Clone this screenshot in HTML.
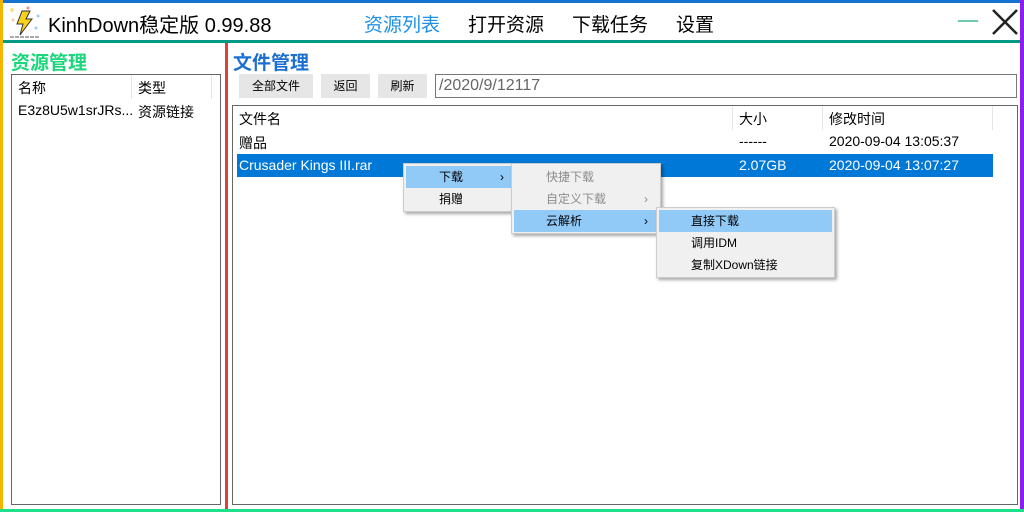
<!DOCTYPE html>
<html><head><meta charset="utf-8"><style>
*{margin:0;padding:0;box-sizing:border-box}
body{width:1024px;height:512px;position:relative;overflow:hidden;background:#fff;font-family:"Liberation Sans","Noto Sans CJK SC",sans-serif;font-size:14px;color:#000}
.a{position:absolute}
.t{white-space:nowrap}
.btn{position:absolute;background:#e6e6e6;top:74px;height:24px;text-align:center;line-height:24px;font-size:12px}
.menu{position:absolute;background:#f0f0f0;border:1px solid #ccc;box-shadow:2px 2px 3px rgba(0,0,0,.35);font-size:12px}
.mi{position:absolute;height:22px;line-height:22px;white-space:nowrap}
.hl{background:#91c9f7}
.dis{color:#8c8c8c}
</style></head><body>
<div class="a" style="left:0;top:0;width:1024px;height:3px;background:#1473d0"></div>
<div class="a" style="left:0;top:0;width:3px;height:512px;background:#f5b400"></div>
<div class="a" style="right:0;top:0;width:4px;height:512px;background:#8a1ff0"></div>
<div class="a" style="left:0;bottom:0;width:1024px;height:3px;background:#1ee08a"></div>
<div class="a" style="left:3px;top:40px;width:1017px;height:3px;background:#009a86"></div>
<div class="a" style="left:225px;top:43px;width:3px;height:466px;background:#d9443a"></div>
<svg class="a" style="left:8px;top:6px" width="34" height="32" viewBox="0 0 34 32">
<circle cx="4" cy="4" r="2" fill="#fde08a"/><circle cx="20" cy="2" r="1.5" fill="#f88"/><circle cx="30" cy="10" r="1.5" fill="#9cf"/><circle cx="28" cy="22" r="1.5" fill="#9cf"/><circle cx="5" cy="14" r="1.5" fill="#fc9"/>
<path d="M14 5 L22 5 L18 13 L24 13 L12 29 L15 18 L9 18 Z" fill="#f7d21a" stroke="#333" stroke-width="1"/>
<line x1="2" y1="31" x2="32" y2="31" stroke="#555" stroke-width="1" stroke-dasharray="4 1"/>
</svg>
<div class="a t" style="left:48px;top:9px;font-size:20px">KinhDown稳定版 0.99.88</div>
<div class="a t" style="left:364px;top:10px;font-size:19px;color:#1e90e8">资源列表</div>
<div class="a t" style="left:468px;top:10px;font-size:19px">打开资源</div>
<div class="a t" style="left:572px;top:10px;font-size:19px">下载任务</div>
<div class="a t" style="left:676px;top:10px;font-size:19px">设置</div>
<div class="a" style="left:958px;top:20px;width:20px;height:2px;background:#6cc9b0"></div>
<svg class="a" style="left:991px;top:8px" width="28" height="28"><path d="M2 2L26 26M26 2L2 26" stroke="#222" stroke-width="2.5"/></svg>
<div class="a t" style="left:11px;top:48px;font-size:19px;font-weight:bold;color:#1bd67a">资源管理</div>
<div class="a" style="left:11px;top:74px;width:210px;height:431px;border:1px solid #666"></div>
<div class="a" style="left:131px;top:75px;width:1px;height:24px;background:#e5e5e5"></div>
<div class="a" style="left:211px;top:75px;width:1px;height:24px;background:#e5e5e5"></div>
<div class="a t" style="left:18px;top:78px">名称</div>
<div class="a t" style="left:138px;top:78px">类型</div>
<div class="a t" style="left:18px;top:102px">E3z8U5w1srJRs...</div>
<div class="a t" style="left:138px;top:102px">资源链接</div>
<div class="a t" style="left:233px;top:48px;font-size:19px;font-weight:bold;color:#1a6fd0">文件管理</div>
<div class="btn" style="left:239px;width:74px">全部文件</div>
<div class="btn" style="left:321px;width:49px">返回</div>
<div class="btn" style="left:378px;width:49px">刷新</div>
<div class="a t" style="left:435px;top:74px;width:582px;height:24px;border:1px solid #777;color:#666;font-size:16px;line-height:22px;padding-left:3px">/2020/9/12117</div>
<div class="a" style="left:232px;top:105px;width:786px;height:400px;border:1px solid #666"></div>
<div class="a" style="left:732px;top:106px;width:1px;height:24px;background:#e5e5e5"></div>
<div class="a" style="left:822px;top:106px;width:1px;height:24px;background:#e5e5e5"></div>
<div class="a" style="left:992px;top:106px;width:1px;height:24px;background:#e5e5e5"></div>
<div class="a t" style="left:239px;top:109px">文件名</div>
<div class="a t" style="left:739px;top:109px">大小</div>
<div class="a t" style="left:829px;top:109px">修改时间</div>
<div class="a t" style="left:239px;top:133px">赠品</div>
<div class="a t" style="left:739px;top:133px">------</div>
<div class="a t" style="left:829px;top:133px">2020-09-04 13:05:37</div>
<div class="a" style="left:237px;top:154px;width:756px;height:23px;background:#0078d7"></div>
<div class="a t" style="left:239px;top:157px;color:#fff">Crusader Kings III.rar</div>
<div class="a t" style="left:739px;top:157px;color:#fff">2.07GB</div>
<div class="a t" style="left:829px;top:157px;color:#fff">2020-09-04 13:07:27</div>
<div class="menu" style="left:403px;top:163px;width:110px;height:49px">
<div class="mi hl" style="left:2px;top:2px;width:105px;padding-left:33px">下载<span style="position:absolute;left:94px">›</span></div>
<div class="mi" style="left:2px;top:24px;padding-left:33px">捐赠</div>
</div>
<div class="menu" style="left:511px;top:163px;width:150px;height:71px">
<div class="mi dis" style="left:2px;top:2px;padding-left:32px">快捷下载</div>
<div class="mi dis" style="left:2px;top:24px;width:145px;padding-left:32px">自定义下载<span style="position:absolute;left:130px">›</span></div>
<div class="mi hl" style="left:2px;top:46px;width:145px;padding-left:32px">云解析<span style="position:absolute;left:130px">›</span></div>
</div>
<div class="menu" style="left:656px;top:207px;width:179px;height:71px">
<div class="mi hl" style="left:2px;top:2px;width:173px;padding-left:32px">直接下载</div>
<div class="mi" style="left:2px;top:24px;padding-left:32px">调用IDM</div>
<div class="mi" style="left:2px;top:46px;padding-left:32px">复制XDown链接</div>
</div>
</body></html>
